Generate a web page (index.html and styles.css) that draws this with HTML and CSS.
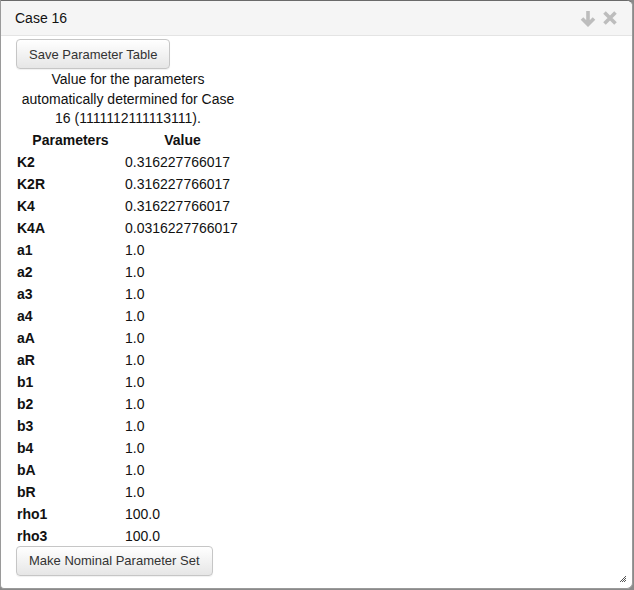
FILE: index.html
```html
<!DOCTYPE html>
<html>
<head>
<meta charset="utf-8">
<link rel="stylesheet" href="styles.css">
</head>
<body>
<div class="dialog">
  <div class="titlebar">
    <span class="title">Case 16</span>
    <span class="icons">
      <svg width="18" height="18" viewBox="0 0 18 18"><path d="M9 2v13M3 9.5l6 6 6-6" fill="none" stroke="#bdbdbd" stroke-width="3.6"/></svg>
      <svg width="16" height="16" viewBox="0 0 16 16"><path d="M2.5 2.5l11 11M13.5 2.5l-11 11" fill="none" stroke="#bdbdbd" stroke-width="3.6"/></svg>
    </span>
  </div>
  <div class="content">
    <button class="btn">Save Parameter Table</button>
    <table class="params">
      <caption>Value for the parameters automatically determined for Case 16 (1111112111113111).</caption>
      <thead>
        <tr><th>Parameters</th><th>Value</th></tr>
      </thead>
      <tbody>
        <tr><td class="k">K2</td><td>0.316227766017</td></tr>
        <tr><td class="k">K2R</td><td>0.316227766017</td></tr>
        <tr><td class="k">K4</td><td>0.316227766017</td></tr>
        <tr><td class="k">K4A</td><td>0.0316227766017</td></tr>
        <tr><td class="k">a1</td><td>1.0</td></tr>
        <tr><td class="k">a2</td><td>1.0</td></tr>
        <tr><td class="k">a3</td><td>1.0</td></tr>
        <tr><td class="k">a4</td><td>1.0</td></tr>
        <tr><td class="k">aA</td><td>1.0</td></tr>
        <tr><td class="k">aR</td><td>1.0</td></tr>
        <tr><td class="k">b1</td><td>1.0</td></tr>
        <tr><td class="k">b2</td><td>1.0</td></tr>
        <tr><td class="k">b3</td><td>1.0</td></tr>
        <tr><td class="k">b4</td><td>1.0</td></tr>
        <tr><td class="k">bA</td><td>1.0</td></tr>
        <tr><td class="k">bR</td><td>1.0</td></tr>
        <tr><td class="k">rho1</td><td>100.0</td></tr>
        <tr><td class="k">rho3</td><td>100.0</td></tr>
      </tbody>
    </table>
    <button class="btn">Make Nominal Parameter Set</button>
  </div>
  <svg class="grip" width="8" height="8" viewBox="0 0 8 8"><path d="M1 7L7 1M3 7L7 3M5 7L7 5" stroke="#555" stroke-width="1"/></svg>
</div>
</body>
</html>
```

FILE: styles.css
```css
html, body {
  margin: 0;
  padding: 0;
  background: #8a8a8a;
}
body {
  font-family: "Liberation Sans", Arial, sans-serif;
  font-size: 14px;
  color: #222;
}
.dialog {
  position: relative;
  box-sizing: border-box;
  width: 633px;
  height: 589px;
  background: #fff;
  border: 1px solid #9a9a9a;
  border-top-color: #6a6a6a;
  border-radius: 0 6px 6px 4px;
  overflow: hidden;
}
.titlebar {
  height: 35px;
  box-sizing: border-box;
  background: #f5f5f5;
  border-bottom: 1px solid #e4e4e4;
  display: flex;
  align-items: center;
  justify-content: space-between;
  padding: 0 14px 0 14px;
}
.title {
  font-size: 14px;
  color: #111;
}
.icons {
  display: flex;
  gap: 5px;
  align-items: center;
}
.content {
  padding: 3px 0 0 15px;
}
.btn {
  display: block;
  font-family: "Liberation Sans", Arial, sans-serif;
  font-size: 13px;
  color: #333;
  height: 30px;
  padding: 0 12px;
  border: 1px solid #c6c6c6;
  border-radius: 4px;
  background: linear-gradient(#ffffff, #e6e6e6);
  box-shadow: 0 1px 1px rgba(0,0,0,0.06);
}
.params {
  border-collapse: collapse;
  width: 224px;
}
.params caption {
  text-align: center;
  line-height: 19.5px;
  padding: 0 2px;
  color: #111;
  margin-top: 1px;
}
.params th {
  font-weight: bold;
  text-align: center;
  line-height: 20px;
  padding: 1px 0 0 0;
  color: #111;
}
.params th:first-child { width: 109px; }
.params td {
  line-height: 20px;
  padding: 2px 0 0 0;
  color: #111;
}
.params td.k {
  font-weight: bold;
  padding-left: 1px;
}
.params + .btn {
  margin-top: 0;
}
.grip {
  position: absolute;
  right: 5px;
  bottom: 5px;
}
```
